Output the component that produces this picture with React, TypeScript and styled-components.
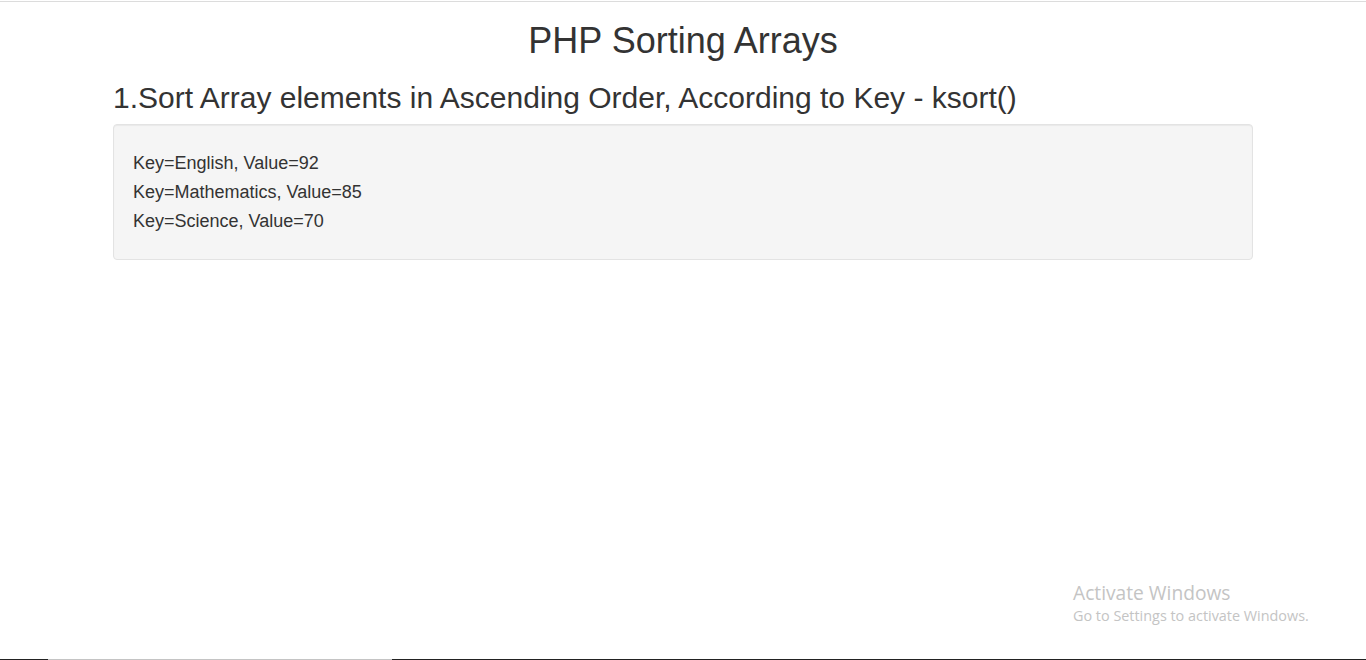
import styled, { createGlobalStyle } from "styled-components";

const GlobalStyle = createGlobalStyle`
  html, body {
    margin: 0;
    padding: 0;
    background: #fff;
  }
  body {
    font-family: "Liberation Sans", Arial, sans-serif;
    color: #333;
  }
`;

const Page = styled.div`
  min-height: 100vh;
  display: flex;
  flex-direction: column;
  position: relative;
  overflow: hidden;
`;

const TopRule = styled.div`
  height: 1px;
  margin-top: 1px;
  background: #dcdcdc;
`;

const Container = styled.div`
  width: 1140px;
  margin: 0 auto;
  flex: 1;
`;

const Title = styled.h1`
  font-size: 36px;
  font-weight: 500;
  line-height: 1.1;
  margin: 19px 0 10px;
  text-align: center;
`;

const Subtitle = styled.h2`
  font-size: 30px;
  font-weight: 500;
  line-height: 1.1;
  margin: 20px 0 10px;
`;

const Well = styled.div`
  background: #f5f5f5;
  border: 1px solid #e3e3e3;
  border-radius: 4px;
  box-shadow: inset 0 1px 1px rgba(0, 0, 0, 0.05);
  padding: 24px 19px 23px;
`;

const Line = styled.div`
  font-size: 18px;
  line-height: 29px;
`;

const Watermark = styled.div`
  position: absolute;
  left: 1073px;
  top: 580px;
  font-family: "Open Sans", "Noto Sans", sans-serif;
  color: #c4c4c4;
`;

const WatermarkTitle = styled.div`
  font-size: 19.2px;
  line-height: 26px;
`;

const WatermarkText = styled.div`
  font-size: 14.4px;
  line-height: 20px;
`;

const Taskbar = styled.div`
  display: flex;
  height: 1px;
`;

const Segment = styled.div<{ $w?: number; $tone: string }>`
  background: ${(p) => p.$tone};
  ${(p) => (p.$w ? `width: ${p.$w}px;` : "flex: 1;")}
`;

const rows = [
  { key: "English", value: 92 },
  { key: "Mathematics", value: 85 },
  { key: "Science", value: 70 },
];

export default function App() {
  return (
    <Page>
      <GlobalStyle />
      <TopRule />
      <Container>
        <Title>PHP Sorting Arrays</Title>
        <Subtitle>1.Sort Array elements in Ascending Order, According to Key - ksort()</Subtitle>
        <Well>
          {rows.map((r) => (
            <Line key={r.key}>
              Key={r.key}, Value={r.value}
            </Line>
          ))}
        </Well>
      </Container>
      <Taskbar>
        <Segment $w={48} $tone="#222" />
        <Segment $w={344} $tone="#c4c4c4" />
        <Segment $tone="#222" />
      </Taskbar>
      <Watermark>
        <WatermarkTitle>Activate Windows</WatermarkTitle>
        <WatermarkText>Go to Settings to activate Windows.</WatermarkText>
      </Watermark>
    </Page>
  );
}
